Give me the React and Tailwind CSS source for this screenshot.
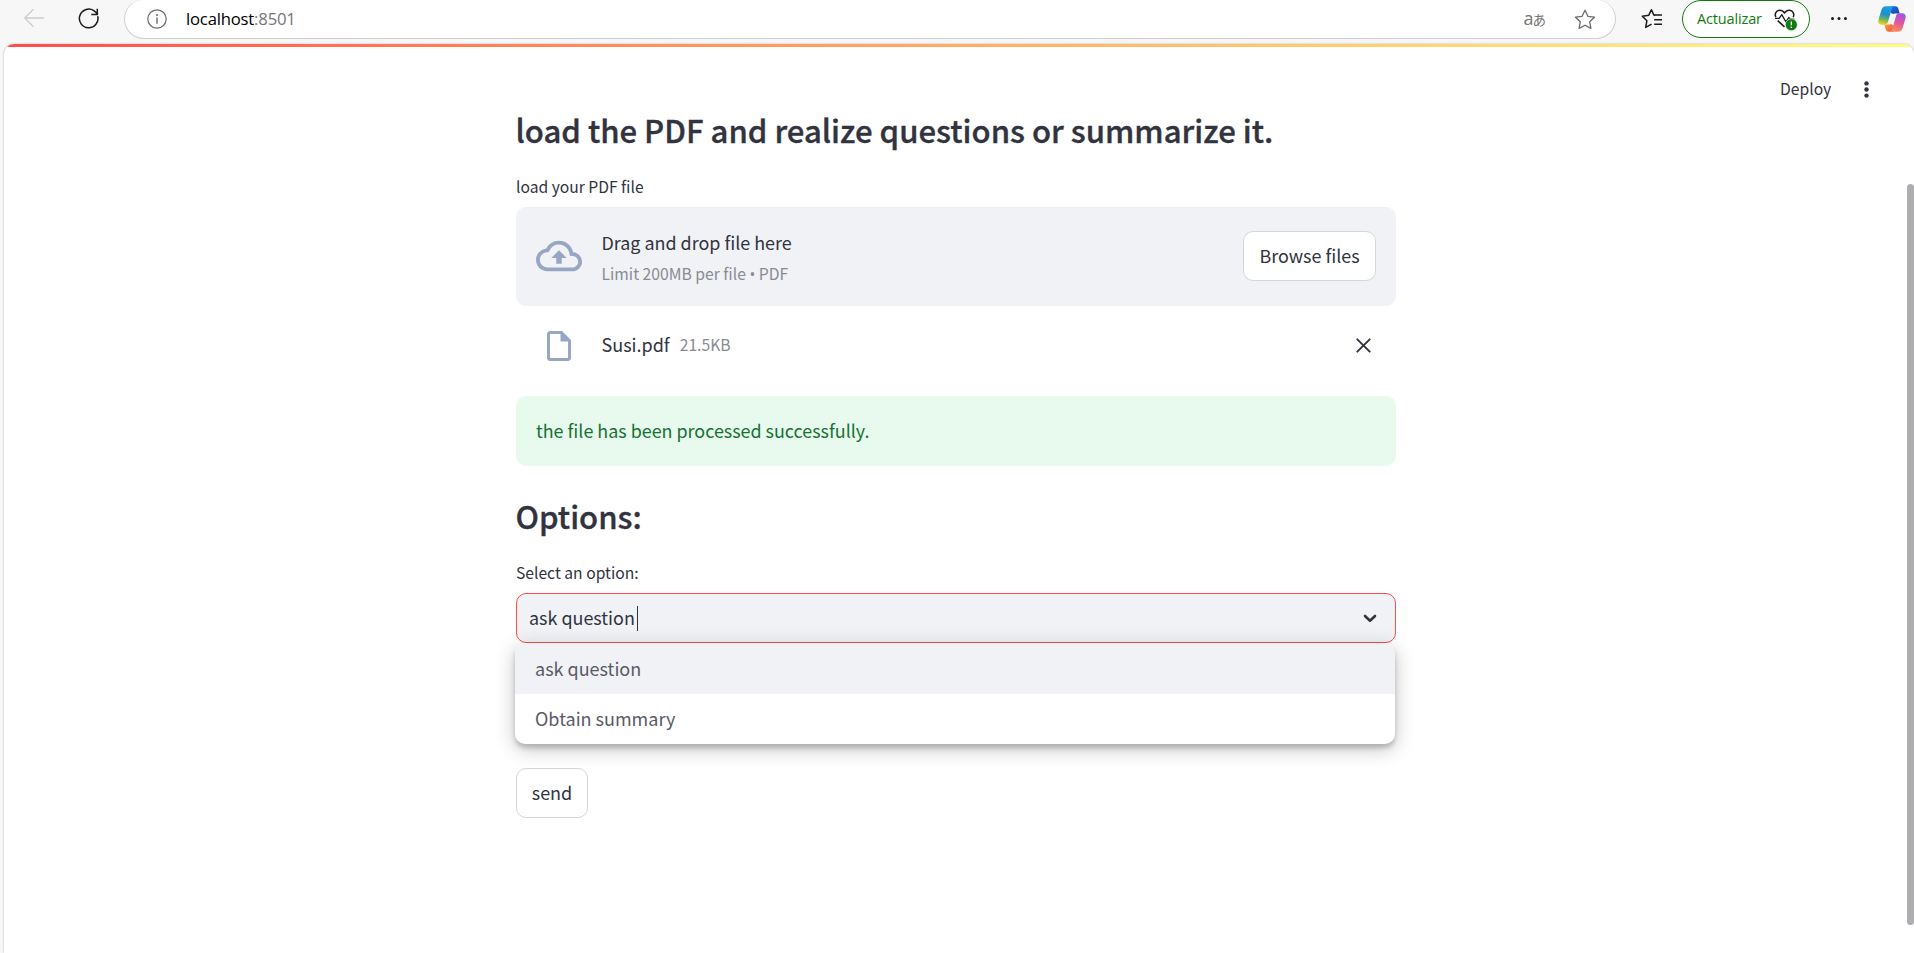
const SANS = "[font-family:'Noto_Sans_CJK_SC',sans-serif]";
const CHROME = "[font-family:'Open_Sans','Noto_Sans_CJK_JP',sans-serif]";

function CopilotLogo() {
  return (
    <svg width="28" height="26" viewBox="0 0 28 26">
      <defs>
        <linearGradient id="cpA" x1="0.6" y1="0" x2="0.4" y2="1">
          <stop offset="0" stopColor="#18a0ea" />
          <stop offset="0.45" stopColor="#1e8fd0" />
          <stop offset="0.7" stopColor="#5eb367" />
          <stop offset="1" stopColor="#f2cf1d" />
        </linearGradient>
        <linearGradient id="cpB" x1="0.7" y1="0" x2="0.4" y2="1">
          <stop offset="0" stopColor="#9a55ee" />
          <stop offset="0.5" stopColor="#e0589c" />
          <stop offset="1" stopColor="#ff8a5c" />
        </linearGradient>
        <linearGradient id="cpC" x1="0" y1="0" x2="1" y2="1">
          <stop offset="0" stopColor="#1b6fe0" />
          <stop offset="1" stopColor="#1c3fae" />
        </linearGradient>
        <linearGradient id="cpD" x1="0" y1="0" x2="1" y2="1">
          <stop offset="0" stopColor="#f7a63a" />
          <stop offset="1" stopColor="#f0513c" />
        </linearGradient>
      </defs>
      <path d="M13 .3h4.300c1.600 0 2.500.8 3 2.400l1.400 4.700h-3.200c-1.500 0-2.500.1-3.500.5L13 7z" fill="url(#cpC)" />
      <path d="M15 25.700h-4.300c-1.600 0-2.500-.8-3-2.400l-1.400-4.700h3.200c1.500 0 2.500-.1 3.500-.5L15 19z" fill="url(#cpD)" />
      <path d="M8 .3h8.200c-1.700.5-2.200 2-2.700 3.700L10.100 15.500c-.6 2.100-1.600 3.200-3.700 3.200H3.800C1 18.700-.2 16.500.5 13.800L3.400 4C4.100 1.600 5.500.3 8 .3z" fill="url(#cpA)" />
      <path d="M20 25.700h-8.200c1.700-.5 2.200-2 2.700-3.700L17.900 10.500c.6-2.100 1.600-3.200 3.700-3.200h2.600c2.800 0 4 2.200 3.300 4.900L24.600 22c-.7 2.400-2.100 3.700-4.600 3.700z" fill="url(#cpB)" />
    </svg>
  );
}

function Toolbar() {
  return (
    <div className={`flex h-[44px] shrink-0 items-start bg-[#f7f7f7] ${CHROME}`}>
      <svg className="mt-[8px] ml-[23px] shrink-0" width="22" height="20" viewBox="0 0 22 20" fill="none" stroke="#cdcdcd" strokeWidth="1.3">
        <path d="M10.500 1.200 1.700 10l8.800 8.800M1.700 10h19.300" />
      </svg>
      <svg className="mt-[8px] ml-[33px] shrink-0" width="22" height="22" viewBox="0 0 22 22" fill="none" stroke="#1b1b1b" strokeWidth="1.5">
        <path d="M19.700 8.200A9.300 9.300 0 1 1 15.800 2.700L20 6.200M19.300 .8V6.500H13.300" />
      </svg>
      <div className="ml-[24px] flex h-[39px] w-[1492px] shrink-0 rounded-b-[20px] rounded-t-[19px] border border-t-0 border-[#cfcfcf] bg-white">
        <svg className="mt-[9px] ml-[22px] shrink-0" width="20" height="20" viewBox="0 0 20 20" fill="none" stroke="#6b6b6b" strokeWidth="1.200">
          <circle cx="10" cy="10" r="9.200" />
          <path d="M10 8.500v6.200" strokeWidth="1.400" />
          <circle cx="10" cy="5.900" r="1" fill="#6b6b6b" stroke="none" />
        </svg>
        <span className="ml-[19px] mt-[4px] text-[16.7px] leading-[30px] tracking-[-0.2px] text-black">
          localhost<span className="text-[#767676]">:8501</span>
        </span>
        <span className="ml-auto mt-[3px] flex items-baseline text-[18px] leading-[30px] text-[#767676]">
          a<span className="-ml-px text-[13.5px] leading-none">あ</span>
        </span>
        <svg className="mr-[19px] ml-[28px] mt-[9px] shrink-0" width="22" height="21" viewBox="0 0 22 21" fill="none" stroke="#6b6b6b" strokeWidth="1.300" strokeLinejoin="round">
          <path d="M11 1.200l2.900 6.100 6.600.9-4.800 4.600 1.200 6.600-5.900-3.200-5.900 3.200 1.200-6.600L1.500 8.200l6.600-.9z" />
        </svg>
      </div>
      <svg className="mt-[8px] ml-[25px] shrink-0" width="22" height="21" viewBox="0 0 22 21" fill="none" stroke="#1b1b1b" strokeWidth="1.500" strokeLinejoin="round">
        <path d="M14.300 7.200 12.800 7 10.500 1.700 7.800 7.200 1.300 8.200l4.600 4.500-1.200 6.700 5.900-3.200" />
        <path d="M13.200 6.900H21M13.200 11.700H21M13.200 16.300H21" strokeLinejoin="miter" />
      </svg>
      <div className="ml-[19px] flex h-[38px] w-[128px] shrink-0 rounded-[19px] border border-[#107c10] bg-white">
        <span className="mt-[3px] ml-[14px] w-[66px] text-[14.5px] leading-[30px] tracking-[-0.15px] text-[#107c10]">Actualizar</span>
        <svg className="mt-[8px] ml-[11px] shrink-0" width="24" height="22" viewBox="0 0 24 22" fill="none" stroke="#1b1b1b" strokeWidth="1.500" strokeLinejoin="round">
          <path d="M1.900 8.200C.3 5 2 1.300 5.700 1.300c2.200 0 3.700 1 4.800 2.700 1.100-1.700 2.600-2.700 4.800-2.700 3.700 0 5.400 3.700 3.900 6.900" />
          <path d="M1 9.300h4.200l2.600-3.700 4 7.200 3-4.300 1.400 1.600h4.200" strokeWidth="1.300" />
          <path d="M3.700 11.600l6.800 6.300" />
          <circle cx="17.300" cy="15.800" r="6" fill="#107c10" stroke="#ffffff" strokeWidth="0.600" />
          <path d="M17.300 12.500v3.800M17.300 17.600v1.400" stroke="#ffffff" strokeWidth="1.300" />
        </svg>
      </div>
      <svg className="mt-[16px] ml-[20px] shrink-0" width="18" height="5" viewBox="0 0 18 5" fill="#1b1b1b">
        <circle cx="2.500" cy="2.500" r="1.500" />
        <circle cx="9" cy="2.500" r="1.500" />
        <circle cx="15.500" cy="2.500" r="1.500" />
      </svg>
      <div className="ml-[30px] mt-[6px] shrink-0">
        <CopilotLogo />
      </div>
    </div>
  );
}

function Uploader() {
  return (
    <div className="mt-[6px] flex h-[99px] items-center rounded-[10px] bg-[#f0f2f6] pr-[20px] pb-px pl-[20px]">
      <svg width="46" height="46" viewBox="0 0 24 24" fill="#98a6c5">
        <path d="M19.350 10.040A7.490 7.490 0 0012 4C9.110 4 6.600 5.640 5.350 8.040A5.994 5.994 0 000 14c0 3.310 2.690 6 6 6h13c2.760 0 5-2.240 5-5 0-2.640-2.050-4.780-4.650-4.960zM19 18H6c-2.210 0-4-1.790-4-4 0-2.050 1.530-3.760 3.560-3.970l1.070-.11.5-.95A5.469 5.469 0 0112 6c2.620 0 4.880 1.860 5.390 4.430l.3 1.500 1.530.11A2.980 2.980 0 0122 15c0 1.650-1.350 3-3 3zM8 13h2.550v3h2.900v-3H16l-4-4z" />
      </svg>
      <div className="ml-[19.5px] flex flex-col gap-[2px] pt-[4px]">
        <span className="text-[17.92px] leading-[30px]">Drag and drop file here</span>
        <span className="text-[15.7px] leading-[30px] text-[#898b93]">
          Limit 200MB per file <span className="[font-family:'Open_Sans']">•</span> PDF
        </span>
      </div>
      <button className="ml-auto flex h-[50px] w-[133px] items-center justify-center rounded-[10px] border border-[#d6d6d9] bg-white pb-px text-[17.92px]">
        Browse files
      </button>
    </div>
  );
}

function UploadedFile() {
  return (
    <div className="mt-[17px] flex h-[46px] items-center pr-[25px] pl-[25px]">
      <svg width="36" height="36" viewBox="0 0 24 24" fill="#98a6c5">
        <path d="M14 2H6c-1.100 0-1.990.9-1.990 2L4 20c0 1.100.89 2 1.990 2H18c1.100 0 2-.9 2-2V8l-6-6zM6 20V4h7v5h5v11H6z" />
      </svg>
      <span className="ml-[24.5px] pb-[5px] text-[18px] leading-[30px]">Susi.pdf</span>
      <span className="ml-[10px] pb-[3px] text-[15.7px] leading-[30px] text-[#898b93]">21.5KB</span>
      <svg className="mb-[2px] ml-auto" width="15" height="15" viewBox="0 0 15 15" stroke="#31333f" strokeWidth="1.900" strokeLinecap="round">
        <path d="M1.300 1.300l12.400 12.400M13.700 1.300L1.300 13.700" />
      </svg>
    </div>
  );
}

function OptionSelect() {
  return (
    <div className="relative mt-[6px]">
      <div className="flex h-[50px] items-center rounded-[10px] border border-[#ff4b4b] bg-[#f0f2f6] pr-[18px] pl-[12px]">
        <span className="pb-[2px] text-[17.95px] leading-[30px]">ask question</span>
        <span className="ml-[2px] h-[25px] w-px bg-[#31333f]" />
        <svg className="ml-auto" width="14" height="9" viewBox="0 0 14 9" fill="none" stroke="#31333f" strokeWidth="2.600" strokeLinecap="round" strokeLinejoin="round">
          <path d="M2 2l5 4.700L12 2" />
        </svg>
      </div>
      <div className="absolute top-[50px] -left-px flex h-[101px] w-[880px] flex-col overflow-hidden rounded-[10px] bg-white text-[18px] leading-[30px] text-[#5a5b65] shadow-[0_4px_4px_rgba(49,51,63,0.22),0_5px_20px_rgba(0,0,0,0.24)]">
        <div className="flex h-[51px] items-center bg-[#f0f2f6] pb-[2px] pl-[20px]">ask question</div>
        <div className="flex h-[50px] items-center pb-[2px] pl-[20px]">Obtain summary</div>
      </div>
    </div>
  );
}

export default function App() {
  return (
    <div className={`flex h-[953px] w-[1914px] flex-col overflow-hidden bg-[#f7f7f7] whitespace-nowrap text-[#31333f] ${SANS}`}>
      <Toolbar />
      <div className="ml-[4px] flex w-[1910px] grow flex-col overflow-hidden rounded-t-[10px] bg-white shadow-[0_0_2px_rgba(0,0,0,0.3)]">
        <div className="h-[3px] shrink-0 bg-linear-to-r from-[#ff4b4b] to-[#fffd80]" />
        <div className="flex grow">
          <main className="ml-[512px] flex w-[880px] flex-col pt-[62px]">
            <h1 className="-ml-[0.5px] text-[31.1px] leading-[42px] font-medium [-webkit-text-stroke:0.35px_#31333f]">load the PDF and realize questions or summarize it.</h1>
            <label className="mt-[22px] text-[15.65px] leading-[28px]">load your PDF file</label>
            <Uploader />
            <UploadedFile />
            <div className="mt-[27px] flex h-[70px] items-start rounded-[10px] bg-[#e8f9ee] pt-[19px] pl-[20px] text-[17.92px] leading-[30px] text-[#177233]">
              the file has been processed successfully.
            </div>
            <h2 className="mt-[29px] -ml-[0.5px] text-[31.1px] leading-[42px] font-medium [-webkit-text-stroke:0.35px_#31333f]">Options:</h2>
            <label className="mt-[22px] text-[15.65px] leading-[28px]">Select an option:</label>
            <OptionSelect />
            <button className="mt-[125px] flex h-[50px] w-[72px] items-center justify-center rounded-[10px] border border-[#d6d6d9] pb-[2px] text-[18px]">send</button>
          </main>
          <div className="ml-[384px] mt-[28px] flex h-[28px] items-center">
            <span className="w-[52px] text-[15.7px] leading-[28px]">Deploy</span>
            <svg className="ml-[32px]" width="5" height="17" viewBox="0 0 5 17" fill="#31333f">
              <circle cx="2.500" cy="2.400" r="2.200" />
              <circle cx="2.500" cy="8.500" r="2.200" />
              <circle cx="2.500" cy="14.600" r="2.200" />
            </svg>
          </div>
          <div className="mt-[137px] ml-auto h-[741px] w-[7px] rounded-full bg-[#adadb2]" />
        </div>
      </div>
    </div>
  );
}
